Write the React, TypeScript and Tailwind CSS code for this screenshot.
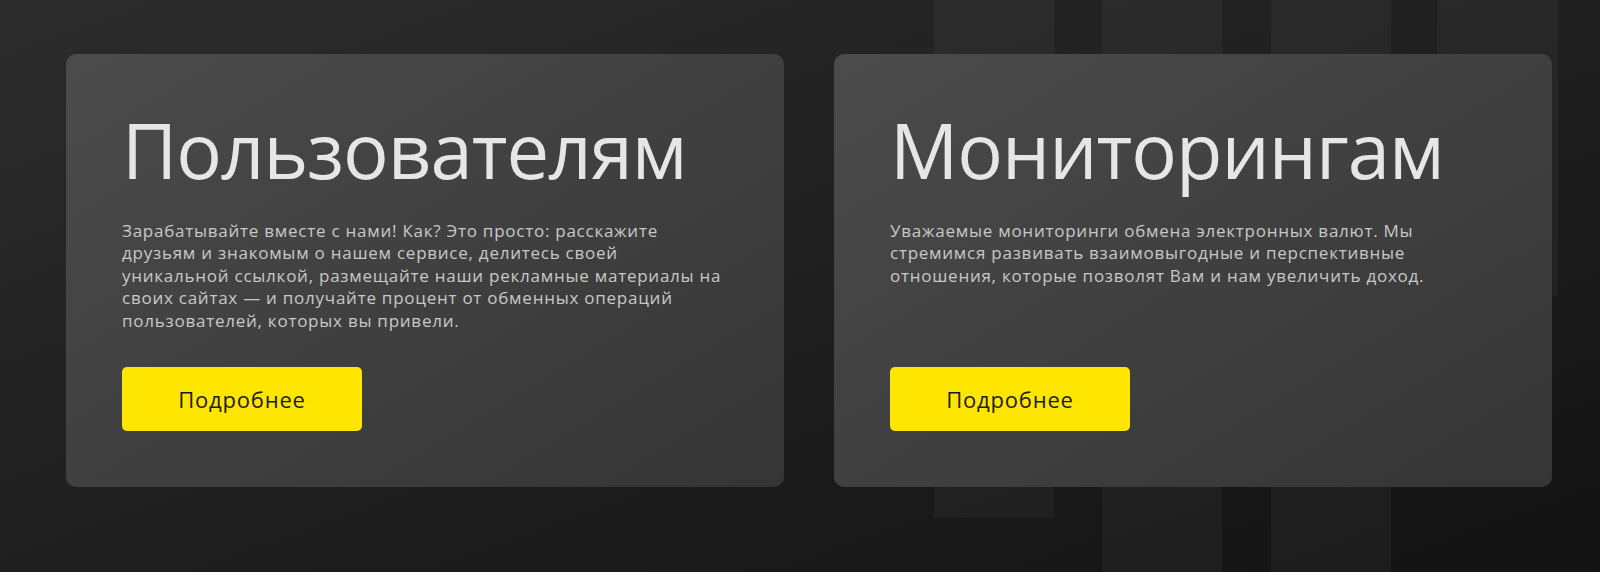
import React from 'react';

type Offer = {
  title: string;
  lines: string[];
};

const offers: Offer[] = [
  {
    title: 'Пользователям',
    lines: [
      'Зарабатывайте вместе с нами! Как? Это просто: расскажите',
      'друзьям и знакомым о нашем сервисе, делитесь своей',
      'уникальной ссылкой, размещайте наши рекламные материалы на',
      'своих сайтах — и получайте процент от обменных операций',
      'пользователей, которых вы привели.',
    ],
  },
  {
    title: 'Мониторингам',
    lines: [
      'Уважаемые мониторинги обмена электронных валют. Мы',
      'стремимся развивать взаимовыгодные и перспективные',
      'отношения, которые позволят Вам и нам увеличить доход.',
    ],
  },
];

// decorative vertical bars behind the right card
function Stripes() {
  return (
    <div className="pointer-events-none absolute inset-0 flex pl-[934px]">
      <div className="w-[120px] h-[518px] bg-white/[0.035]" />
      <div className="w-[48px]" />
      <div className="w-[120px] h-full bg-white/[0.035]" />
      <div className="w-[49px]" />
      <div className="w-[120px] h-full bg-white/[0.035]" />
      <div className="w-[46px]" />
      <div className="w-[121px] h-[296px] bg-white/[0.035]" />
    </div>
  );
}

function OfferCard({ title, lines }: Offer) {
  return (
    <div className="w-[718px] h-[433px] rounded-[10px] bg-gradient-to-br from-[#4b4b4b] to-[#353535] p-[56px] flex flex-col">
      <h2 className="text-[#e6e6e6] text-[76px] leading-[80px] font-normal tracking-[-1px]">{title}</h2>
      <p className="mt-[30px] text-[#c8c8c8] text-[17px] leading-[22.4px] tracking-[0.75px] whitespace-nowrap">
        {lines.map((line, i) => (
          <React.Fragment key={i}>
            {line}
            {i < lines.length - 1 && <br />}
          </React.Fragment>
        ))}
      </p>
      <button className="mt-auto w-[240px] h-[64px] rounded-[5px] bg-[#ffe600] text-[#1b1b1b] text-[22px] tracking-[0.8px]">
        Подробнее
      </button>
    </div>
  );
}

export default function App() {
  return (
    <div className="relative min-h-[572px] w-full overflow-hidden bg-gradient-to-br from-[#2c2c2c] via-[#1f1f1f] to-[#131313] font-['Open_Sans',sans-serif]">
      <Stripes />
      <div className="relative flex gap-[50px] pl-[66px] pt-[54px]">
        {offers.map((o) => (
          <OfferCard key={o.title} {...o} />
        ))}
      </div>
    </div>
  );
}
